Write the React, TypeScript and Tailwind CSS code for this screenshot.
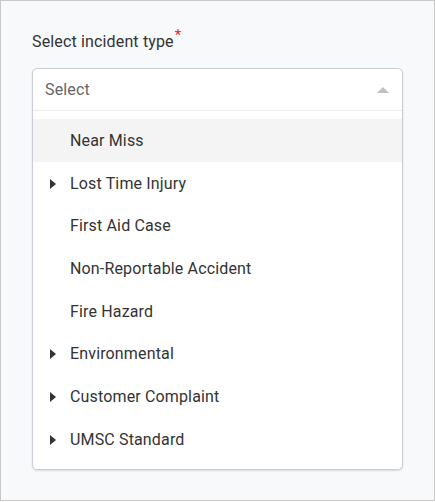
import React from 'react';

const options = [
  { label: 'Near Miss', children: false },
  { label: 'Lost Time Injury', children: true },
  { label: 'First Aid Case', children: false },
  { label: 'Non-Reportable Accident', children: false },
  { label: 'Fire Hazard', children: false },
  { label: 'Environmental', children: true },
  { label: 'Customer Complaint', children: true },
  { label: 'UMSC Standard', children: true },
];

export default function App() {
  return (
    <div
      className="w-[435px] h-[501px] bg-[#f8f9fb] border border-[#c8c8c8] px-[31px] pt-[30px] tracking-[0.15px]"
      style={{ fontFamily: 'Roboto, "Liberation Sans", sans-serif' }}
    >
      <label className="flex items-start text-[16px] leading-[22px] text-[#333] h-[22px]">
        Select incident type
        <span className="text-[#f5222d] text-[15px] leading-[10px] ml-[1px] -mt-[1px]">*</span>
      </label>
      <div className="mt-[15px] bg-white border border-[#c9ced6] rounded-[5px] shadow-[0_1px_2px_rgba(0,0,0,0.12)]">
        <div className="flex items-center justify-between h-[42px] pl-[12px] pr-[13px] border-b border-[#ececec]">
          <span className="text-[16px] text-[#666]">Select</span>
          <span className="w-0 h-0 border-l-[6px] border-r-[6px] border-b-[6px] border-l-transparent border-r-transparent border-b-[#c0c0c0]"></span>
        </div>
        <ul className="py-[8px]">
          {options.map((o, i) => (
            <li
              key={o.label}
              className={
                'flex items-center h-[42.7px] pt-[1px] text-[16px] text-[#333] ' +
                (i === 0 ? 'bg-[#f4f4f4]' : '')
              }
            >
              <span className="w-[37px] flex justify-center pl-[3px]">
                {o.children && (
                  <span className="w-0 h-0 border-t-[5px] border-b-[5px] border-l-[6px] border-t-transparent border-b-transparent border-l-[#333]"></span>
                )}
              </span>
              <span>{o.label}</span>
            </li>
          ))}
        </ul>
      </div>
    </div>
  );
}
